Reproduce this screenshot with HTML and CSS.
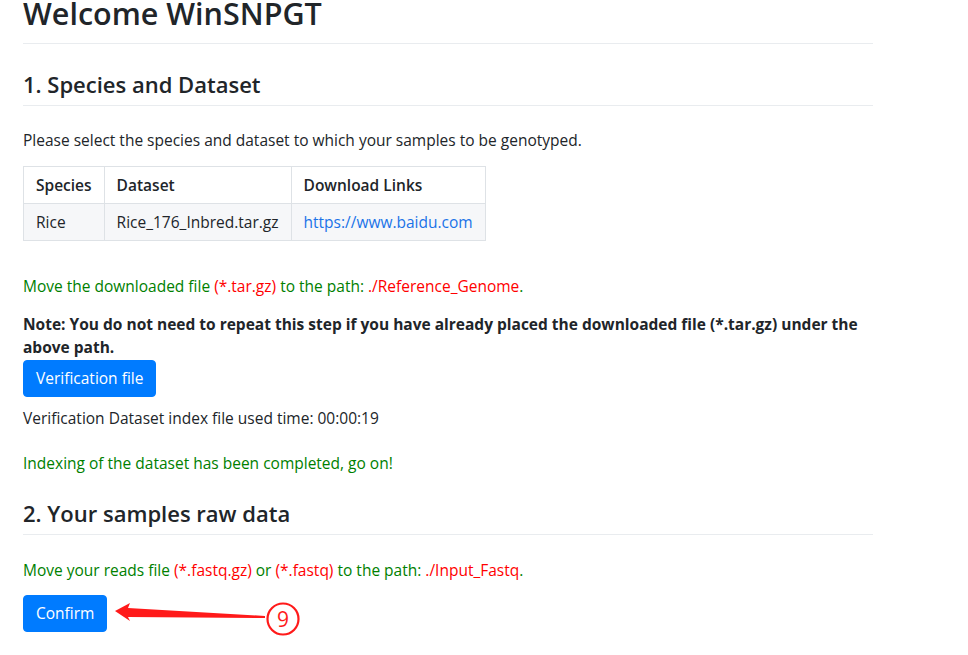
FILE: index.html
```html
<!DOCTYPE html>
<html>
<head>
<meta charset="utf-8">
<link rel="stylesheet" href="styles.css">
</head>
<body>
<div class="page">
  <h1 class="title">Welcome WinSNPGT</h1>
  <hr class="rule first">
  <h4 class="section">1. Species and Dataset</h4>
  <hr class="rule">
  <p class="text intro">Please select the species and dataset to which your samples to be genotyped.</p>
  <table class="data">
    <thead>
      <tr><th>Species</th><th>Dataset</th><th>Download Links</th></tr>
    </thead>
    <tbody>
      <tr><td>Rice</td><td>Rice_176_Inbred.tar.gz</td><td><a href="#">https://www.baidu.com</a></td></tr>
    </tbody>
  </table>
  <p class="text green move">Move the downloaded file <span class="red">(*.tar.gz)</span> to the path: <span class="red">./Reference_Genome</span>.</p>
  <p class="text note">Note: You do not need to repeat this step if you have already placed the downloaded file (*.tar.gz) under the above path.</p>
  <button class="btn">Verification file</button>
  <p class="text used">Verification Dataset index file used time: 00:00:19</p>
  <p class="text green done">Indexing of the dataset has been completed, go on!</p>
  <h4 class="section second">2. Your samples raw data</h4>
  <hr class="rule">
  <p class="text green move2">Move your reads file <span class="red">(*.fastq.gz)</span> or <span class="red">(*.fastq)</span> to the path: <span class="red">./Input_Fastq</span>.</p>
  <div class="confirm-row">
    <button class="btn">Confirm</button>
    <svg class="annot" width="200" height="50" viewBox="0 0 200 50">
      <polygon points="10,17 25,9 23,14 160,22 160,24 23,23 25,27" fill="#ff1a1a"/>
      <circle cx="178" cy="25" r="15.5" fill="none" stroke="#ff1a1a" stroke-width="2.2"/>
      <text x="178" y="32.5" text-anchor="middle" class="num">9</text>
    </svg>
  </div>
</div>
</body>
</html>
```
FILE: styles.css
```css
html, body {
  margin: 0;
  padding: 0;
  background: #fff;
}
body {
  font-family: "Open Sans", "Noto Sans", sans-serif;
  color: #212529;
  font-size: 15.5px;
  line-height: 23px;
}
.page {
  width: 850px;
  padding-left: 23px;
  padding-bottom: 20px;
}
.title {
  font-size: 30.5px;
  font-weight: 600;
  line-height: 26px;
  margin: 0;
}
.rule {
  border: 0;
  border-top: 1px solid #e9ecef;
  margin: 11px 0 0 0;
}
.rule.first {
  margin-top: 17px;
}
.section {
  font-size: 22px;
  font-weight: 600;
  line-height: 29px;
  margin: 26px 0 0 0;
}
.section.second {
  margin-top: 24px;
}
.section + .rule {
  margin-top: 6px;
}
.text {
  margin: 0;
}
.intro {
  margin-top: 23px;
}
.data {
  border-collapse: collapse;
  margin-top: 14px;
}
.data th, .data td {
  border: 1px solid #dee2e6;
  padding: 6px 12px 6px 12px;
  text-align: left;
  height: 24px;
  font-weight: 400;
}
.data th {
  font-weight: 600;
}
.data tbody tr {
  background: #f6f7f9;
}
.data a {
  color: #1a73e8;
  text-decoration: none;
}
.green { color: #008000; }
.red { color: #ff0000; }
.move { margin-top: 34px; }
.note {
  margin-top: 15px;
  font-weight: 700;
}
.btn {
  display: block;
  font-family: inherit;
  font-size: 15.5px;
  line-height: 23px;
  color: #fff;
  background: #007bff;
  border: 1px solid #007bff;
  border-radius: 4px;
  padding: 6px 12px;
  margin: 1px 0 0 0;
}
.used { margin-top: 10px; }
.done { margin-top: 22px; }
.move2 { margin-top: 24px; }
.confirm-row {
  position: relative;
  margin-top: 13px;
}
.annot {
  position: absolute;
  left: 82px;
  top: -1px;
}
.num {
  font-family: "Open Sans", sans-serif;
  font-size: 21px;
  fill: #ff1a1a;
}
```
